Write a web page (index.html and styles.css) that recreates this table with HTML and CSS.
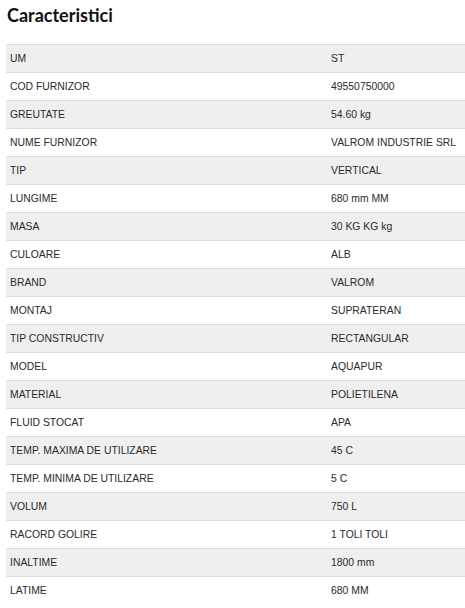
FILE: index.html
```html
<!DOCTYPE html>
<html>
<head>
<meta charset="utf-8">
<link rel="stylesheet" href="styles.css">
</head>
<body>
<h2 class="title">Caracteristici</h2>
<table class="specs">
<tbody>
<tr><td>UM</td><td>ST</td></tr>
<tr><td>COD FURNIZOR</td><td>49550750000</td></tr>
<tr><td>GREUTATE</td><td>54.60 kg</td></tr>
<tr><td>NUME FURNIZOR</td><td>VALROM INDUSTRIE SRL</td></tr>
<tr><td>TIP</td><td>VERTICAL</td></tr>
<tr><td>LUNGIME</td><td>680 mm MM</td></tr>
<tr><td>MASA</td><td>30 KG KG kg</td></tr>
<tr><td>CULOARE</td><td>ALB</td></tr>
<tr><td>BRAND</td><td>VALROM</td></tr>
<tr><td>MONTAJ</td><td>SUPRATERAN</td></tr>
<tr><td>TIP CONSTRUCTIV</td><td>RECTANGULAR</td></tr>
<tr><td>MODEL</td><td>AQUAPUR</td></tr>
<tr><td>MATERIAL</td><td>POLIETILENA</td></tr>
<tr><td>FLUID STOCAT</td><td>APA</td></tr>
<tr><td>TEMP. MAXIMA DE UTILIZARE</td><td>45 C</td></tr>
<tr><td>TEMP. MINIMA DE UTILIZARE</td><td>5 C</td></tr>
<tr><td>VOLUM</td><td>750 L</td></tr>
<tr><td>RACORD GOLIRE</td><td>1 TOLI TOLI</td></tr>
<tr><td>INALTIME</td><td>1800 mm</td></tr>
<tr><td>LATIME</td><td>680 MM</td></tr>
</tbody>
</table>
</body>
</html>
```
FILE: styles.css
```css
html, body {
  margin: 0;
  padding: 0;
  background: #fff;
}
body {
  padding: 0 0 0 6px;
  font-family: "Liberation Sans", Arial, sans-serif;
  color: #333;
}
.title {
  margin: 0;
  height: 44px;
  padding: 4px 0 0 1px;
  box-sizing: border-box;
  font-family: Lato, "Noto Sans", sans-serif;
  font-weight: 700;
  font-size: 18px;
  line-height: 22px;
  color: #111;
}
.specs {
  width: 459px;
  table-layout: fixed;
  border-collapse: collapse;
  font-size: 10.4px;
  color: #2a2a2a;
}
.specs td {
  height: 26px;
  padding: 0 0 1px 4px;
  border-top: 1px solid #dcdcdc;
  vertical-align: middle;
  white-space: nowrap;
}
.specs td:first-child {
  width: 317px;
}
.specs tr:nth-child(odd) td {
  background: #efefef;
}
```
